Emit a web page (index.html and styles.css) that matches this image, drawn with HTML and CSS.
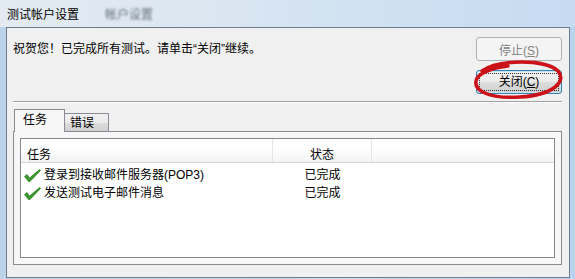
FILE: index.html
```html
<!DOCTYPE html>
<html lang="zh-CN">
<head>
    <meta charset="UTF-8">
    <title>测试帐户设置</title>
    <link rel="stylesheet" href="styles.css">
</head>
<body>
    <div class="window">
        <div class="titlebar">
            <span class="title">测试帐户设置</span>
            <span class="title-blur">帐户设置</span>
        </div>

        <div class="client">
            <div class="top">
                <p class="message">祝贺您！已完成所有测试。请单击“关闭”继续。</p>
                <div class="actions">
                    <button class="btn" disabled>停止(<u>S</u>)</button>
                    <button class="btn btn-default"><span class="focus">关闭(<u>C</u>)</span></button>
                    <!-- red marker drawn over the close button -->
                    <svg class="mark" width="104" height="46" viewBox="0 0 104 46">
                        <path d="M16 14 C32 2, 80 2, 92 14 C101 24, 88 38, 54 40 C24 42, 8 34, 10 24 C11 17, 24 11, 42 9"
                              fill="none" stroke="#cc1219" stroke-width="3.5" stroke-linecap="round"/>
                    </svg>
                </div>
            </div>

            <div class="separator"></div>

            <div class="tabs">
                <div class="tab active">任务</div>
                <div class="tab">错误</div>
            </div>

            <div class="panel">
                <div class="list">
                    <div class="list-head">
                        <div class="col-task">任务</div>
                        <div class="col-status">状态</div>
                        <div class="col-rest"></div>
                    </div>
                    <div class="list-body">
                        <div class="row">
                            <div class="col-task">
                                <svg class="check" width="17" height="13" viewBox="0 0 17 13">
                                    <path d="M0.5 7.5 L3 5.5 L5.5 9 L15.5 0.5 L16.5 1.5 L6 12.5 L4.5 12.5 Z" fill="#3a9a2c" stroke="#1d6b16" stroke-width="0.6"/>
                                </svg>
                                登录到接收邮件服务器(POP3)
                            </div>
                            <div class="col-status">已完成</div>
                        </div>
                        <div class="row">
                            <div class="col-task">
                                <svg class="check" width="17" height="13" viewBox="0 0 17 13">
                                    <path d="M0.5 7.5 L3 5.5 L5.5 9 L15.5 0.5 L16.5 1.5 L6 12.5 L4.5 12.5 Z" fill="#3a9a2c" stroke="#1d6b16" stroke-width="0.6"/>
                                </svg>
                                发送测试电子邮件消息
                            </div>
                            <div class="col-status">已完成</div>
                        </div>
                    </div>
                </div>
            </div>
        </div>
    </div>
</body>
</html>
```

FILE: styles.css
```css
* {
    margin: 0;
    padding: 0;
    box-sizing: border-box;
}

body {
    width: 575px;
    height: 279px;
    overflow: hidden;
    font-family: "Liberation Sans", "Noto Sans CJK SC", sans-serif;
    font-size: 12px;
    color: #000;
}

.window {
    width: 575px;
    height: 279px;
    display: flex;
    flex-direction: column;
    background: linear-gradient(to right, #bcd3ea 0%, #c7dbef 60%, #b9d3ee 100%);
}

.titlebar {
    height: 27px;
    display: flex;
    align-items: center;
    padding-left: 7px;
    padding-bottom: 1px;
    background: linear-gradient(to right, #e3eaf1 0%, #dde7f1 30%, #d2e2f2 60%, #c6dbf1 100%);
}

.title-blur {
    margin-left: 26px;
    color: #2d3a48;
    opacity: 0.7;
    filter: blur(1.2px);
}

.client {
    flex: 1;
    margin: 0 5px 1px 6px;
    border: 1px solid #6e7d90;
    background: #f0f0f0;
    padding: 9px 7px 12px 6px;
    display: flex;
    flex-direction: column;
}

.top {
    display: flex;
    justify-content: space-between;
}

.message {
    line-height: 22px;
    margin-top: 1px;
}

.actions {
    position: relative;
    width: 86px;
    display: flex;
    flex-direction: column;
    gap: 9px;
}

.btn {
    height: 24px;
    border: 1px solid #adb2b5;
    border-radius: 3px;
    background: #f4f4f4;
    color: #838383;
    font-family: inherit;
    font-size: 12px;
}

.btn u {
    text-underline-offset: 1px;
}

.btn-default {
    border-color: #3c7fb1;
    color: #000;
    padding: 2px;
    background: linear-gradient(#f2f2f2 0%, #ebebeb 48%, #dddddd 52%, #cfcfcf 100%);
    box-shadow: inset 0 0 0 1px #c4e5f6;
}

.focus {
    display: block;
    height: 100%;
    line-height: 16px;
    border: 1px dotted #333;
}

.mark {
    position: absolute;
    left: -10px;
    top: 20px;
}

.separator {
    margin-top: 7px;
    height: 2px;
    border-top: 1px solid #a0a0a0;
    border-bottom: 1px solid #fff;
}

.tabs {
    margin-top: 6px;
    display: flex;
    align-items: flex-end;
    height: 22px;
    padding-left: 1px;
    position: relative;
    z-index: 1;
}

.tab {
    height: 18px;
    width: 44px;
    padding-left: 5px;
    line-height: 18px;
    border: 1px solid #898c95;
    border-bottom: none;
    border-left: none;
    background: linear-gradient(#f2f2f2 0%, #ebebeb 50%, #dddddd 51%, #cfcfcf 100%);
}

.tab.active {
    height: 23px;
    width: 51px;
    padding-left: 8px;
    line-height: 20px;
    margin-bottom: -1px;
    border-left: 1px solid #898c95;
    background: #f7f7f7;
}

.panel {
    flex: 1;
    border: 1px solid #898c95;
    background: #f7f7f7;
    padding: 6px;
    display: flex;
}

.list {
    flex: 1;
    border: 1px solid #828790;
    background: #fff;
}

.list-head {
    display: flex;
    height: 24px;
    border-bottom: 1px solid #d5d5d5;
    background: linear-gradient(#ffffff 0%, #ffffff 40%, #f3f4f6 100%);
}

.list-head > div {
    padding-top: 6px;
    border-right: 1px solid #e3e5e8;
}

.col-task {
    width: 252px;
    padding-left: 6px;
    display: flex;
    align-items: center;
}

.col-status {
    width: 99px;
    text-align: center;
}

.col-rest {
    flex: 1;
    border-right: none !important;
}

.list-body {
    padding-top: 3px;
}

.row {
    display: flex;
    height: 18px;
    line-height: 18px;
}

.row .col-task {
    padding-left: 3px;
}

.check {
    margin-right: 3px;
    margin-top: 1px;
}
```
